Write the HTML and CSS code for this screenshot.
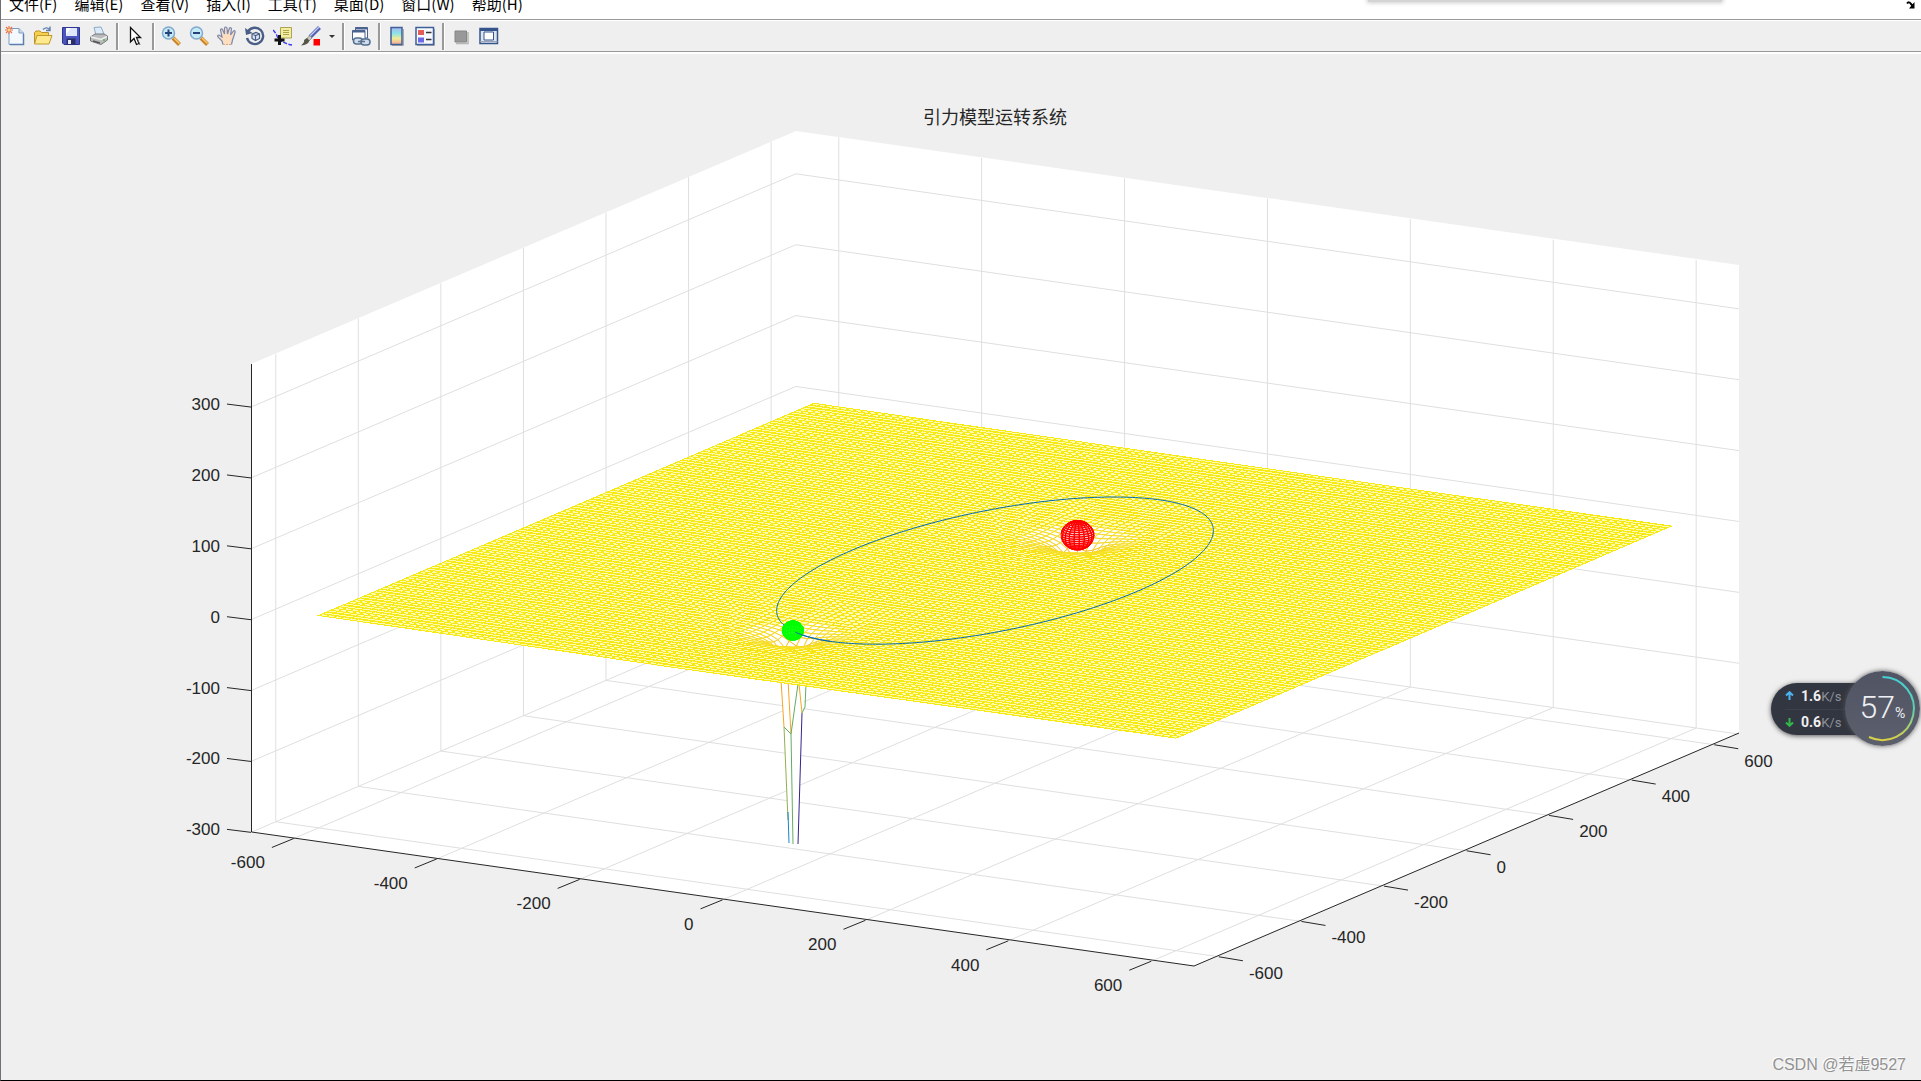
FILE: index.html
```html
<!DOCTYPE html>
<html lang="zh-CN">
<head>
<meta charset="utf-8">
<title>引力模型运转系统</title>
<link rel="stylesheet" href="styles.css">
</head>
<body>
<div class="window">
  <nav class="menubar">
    <button class="menu">文件(F)</button>
    <button class="menu">编辑(E)</button>
    <button class="menu">查看(V)</button>
    <button class="menu">插入(I)</button>
    <button class="menu">工具(T)</button>
    <button class="menu">桌面(D)</button>
    <button class="menu">窗口(W)</button>
    <button class="menu">帮助(H)</button>
    <button class="dock-arrow" aria-label="停靠">
      <svg width="10" height="8" viewBox="0 0 10 8"><path d="M1 2.500Q3 0 5 3L7 5" fill="none" stroke="#000" stroke-width="2"/><path d="M8.500 1V7.500H3Z"/></svg>
    </button>
  </nav>
  <div class="toolbar">
    <button class="tool" aria-label="新建"><svg viewBox="0 0 20 20"><path d="M4 2.500H14L18.500 7V18.500H4Z" fill="#f4f9ff" stroke="#7d9cc4"/><path d="M14 2.500V7H18.500" fill="#c6daf0" stroke="#7d9cc4"/><path d="M18.500 8V18.500H5" fill="none" stroke="#5c7fae" stroke-width="1.500"/><path d="M4 0V8M0 4H8M1 1L7 7M7 1L1 7" stroke="#e8734a" stroke-width="1.200"/><circle cx="4" cy="4" r="1.500" fill="#ffd98a"/></svg></button>
    <button class="tool" aria-label="打开"><svg viewBox="0 0 20 20"><path d="M1.500 17V6.500L3 5H7L8.500 6.500H15.500V17Z" fill="#f5cf4d" stroke="#b8922a"/><path d="M1.500 18L4 9.500H19L16 18Z" fill="#ffe98c" stroke="#c09a2c"/><path d="M10 3.500Q14 0 17 4M17 0.500V4.500H13" fill="none" stroke="#5e7fae" stroke-width="1.400"/></svg></button>
    <button class="tool" aria-label="保存"><svg viewBox="0 0 20 20"><path d="M1.500 1.500H18.500V18.500H3L1.500 17Z" fill="#4a55c0" stroke="#2c3590"/><path d="M5 2H16V10H5Z" fill="#dfe8fb"/><path d="M5 2H10L5 8Z" fill="#fff"/><path d="M5.500 12.500H14.500V18.500H5.500Z" fill="#2a2f66"/><path d="M7 14H10V18H7Z" fill="#e8ebf7"/></svg></button>
    <button class="tool" aria-label="打印"><svg viewBox="0 0 20 20"><path d="M5 1.500L12 1L15 8L7 9Z" fill="#dcebfa" stroke="#8fa9c6"/><path d="M1.500 11L6 8H15L18.500 10V14L12 18.500L1.500 15Z" fill="#b9bbbd" stroke="#77797b"/><path d="M2 11L12 13.500L18 10.500" fill="none" stroke="#eee" stroke-width="1.500"/><path d="M4 15L11 17" stroke="#555" stroke-width="1.500"/><circle cx="15" cy="14" r="1" fill="#57b94a"/></svg></button>
    <span class="sep"></span>
    <button class="tool" aria-label="编辑绘图"><svg viewBox="0 0 20 20"><path d="M5.500 1.500V16L9 12.500L11.500 18.500L14 17.500L11.500 11.500H15.500Z" fill="#fff" stroke="#111" stroke-width="1.300"/><path d="M12 12L15 19" stroke="#555" stroke-dasharray="2 1"/></svg></button>
    <span class="sep"></span>
    <button class="tool" aria-label="放大"><svg viewBox="0 0 20 20"><path d="M12 12L18.500 18.500" stroke="#c7832c" stroke-width="4"/><path d="M13 12L18.500 17.500" stroke="#ffc868" stroke-width="1.500"/><circle cx="7.500" cy="7" r="6" fill="#c4eaf6" stroke="#83a9cf" stroke-width="1.500"/><path d="M4 7H11M7.500 3.500V10.500" stroke="#26427c" stroke-width="2"/></svg></button>
    <button class="tool" aria-label="缩小"><svg viewBox="0 0 20 20"><path d="M12 12L18.500 18.500" stroke="#c7832c" stroke-width="4"/><path d="M13 12L18.500 17.500" stroke="#ffc868" stroke-width="1.500"/><circle cx="7.500" cy="7" r="6" fill="#c4eaf6" stroke="#83a9cf" stroke-width="1.500"/><path d="M4 7H11" stroke="#26427c" stroke-width="2"/></svg></button>
    <button class="tool" aria-label="平移"><svg viewBox="0 0 20 20"><path d="M6 18.500L5 15L1 11Q0 9 2 9L5 11L3.500 4Q4 2 5.500 3.500L7.500 8L7.500 2Q8.500 0 10 2L10.500 8L12.500 2Q14 1 14.500 3L13.500 9L16.500 5Q18.500 4 18 6.500L15.500 14L14.500 18.500" fill="#fddfc0" stroke="#7c88b0" stroke-width="1.200"/><path d="M6 18.500H14.500" stroke="#d9a57c" stroke-dasharray="2 1"/></svg></button>
    <button class="tool" aria-label="三维旋转"><svg viewBox="0 0 20 20"><path d="M3 5.500A8.200 8.200 0 1 1 2 12" fill="none" stroke="#4a5d86" stroke-width="2.400"/><path d="M0 2L1 9L7.500 7Z" fill="#4a5d86"/><path d="M7 8L11 6.500L14.500 8V12.500L10.500 14.500L7 12.500ZM7 8L10.500 9.500L14.500 8M10.500 9.500V14.500" fill="#dbe7f5" stroke="#4a5d86" stroke-width="1.200"/></svg></button>
    <button class="tool" aria-label="数据游标"><svg viewBox="0 0 20 20"><path d="M0 4Q4 8 5 13Q12 18 19 19" fill="none" stroke="#3a3af0" stroke-width="1.400" stroke-dasharray="4 1.500"/><path d="M7.500 1.500H18.500V12H7.500Z" fill="#f2eda0" stroke="#aba552"/><path d="M10 4.500H16M10 6.500H16M10 8.500H16" stroke="#aba552"/><path d="M1.500 14H11.500M6.500 9V19" stroke="#111" stroke-width="3"/></svg></button>
    <button class="tool" aria-label="刷亮"><svg viewBox="0 0 20 20"><path d="M18.500 1.500L9 11" stroke="#5462b4" stroke-width="4"/><path d="M18 1L9 10" stroke="#c5cdf2" stroke-width="1.300"/><path d="M9 9.500L11 12L8 15L5.500 12.500Z" fill="#c9c9c0" stroke="#777" stroke-width=".6"/><path d="M6 12L8.500 14.500Q7 19 0 19.500Q4 16 3 14Z" fill="#55554a"/><path d="M12.500 13H19V19.500H12.500Z" fill="#f00"/></svg></button>
    <button class="tool drop" aria-label="刷亮选项"><svg viewBox="0 0 6 20"><path d="M0 9H6L3 12Z" fill="#333"/></svg></button>
    <span class="sep"></span>
    <button class="tool" aria-label="链接绘图"><svg viewBox="0 0 20 20"><path d="M4.500 1.500H16.500V12H4.500Z" fill="#fff" stroke="#4a628f"/><path d="M1.500 4.500H14V14H1.500Z" fill="#fff" stroke="#4a628f"/><path d="M4.500 2.500H16.500M1.500 5.500H14" stroke="#4a628f" stroke-width="2"/><rect x="2.500" y="12" width="9" height="6" rx="3" fill="#cfdcec" stroke="#56708f" stroke-width="1.500"/><rect x="10" y="13" width="9" height="6" rx="3" fill="#cfdcec" stroke="#56708f" stroke-width="1.500"/><path d="M7 15.500H14" stroke="#56708f" stroke-width="1.500"/></svg></button>
    <span class="sep"></span>
    <button class="tool" aria-label="颜色栏"><svg viewBox="0 0 20 20"><defs><linearGradient id="bar" x2="0" y2="1"><stop stop-color="#aab6f2"/><stop offset=".35" stop-color="#8ce4e4"/><stop offset=".65" stop-color="#f2ec98"/><stop offset="1" stop-color="#f2a496"/></linearGradient></defs><path d="M5 19.500H16.500V3" fill="none" stroke="#aaa"/><path d="M4 1.500H15V18.500H4Z" fill="url(#bar)" stroke="#3f5f96" stroke-width="1.500"/></svg></button>
    <button class="tool" aria-label="图例"><svg viewBox="0 0 20 20"><path d="M2 19.500H19.500V3" fill="none" stroke="#aaa"/><path d="M1 1.500H18.500V18.500H1Z" fill="#f6f9fd" stroke="#3f5f96" stroke-width="1.500"/><path d="M3 4H9V9H3Z" fill="#e06058"/><path d="M3 11.500H9V16.500H3Z" fill="#6a6ae8"/><path d="M11 6.500H16.500M11 13.500H16.500" stroke="#333" stroke-width="1.500"/></svg></button>
    <span class="sep"></span>
    <button class="tool" aria-label="隐藏绘图工具"><svg viewBox="0 0 20 20"><path d="M5 17.500H17V6" fill="none" stroke="#b5b5b5" stroke-width="1.500"/><path d="M4 5H15.500V16H4Z" fill="#999" stroke="#858585"/></svg></button>
    <button class="tool" aria-label="显示绘图工具"><svg viewBox="0 0 20 20"><path d="M1 2.500H18.500V17.500H1Z" fill="#dfe5ee" stroke="#35548c" stroke-width="1.500"/><path d="M1 3.500H18.500" stroke="#35548c" stroke-width="3"/><path d="M5 6H14.500V14H5Z" fill="#fff" stroke="#35548c"/><path d="M1 15.500H18.500" stroke="#9aa5b6"/></svg></button>
  </div>
  <main class="figure">
    <svg id="plot" class="plot" viewBox="1 54 1920 1026" role="img" aria-label="引力模型运转系统">
      <path class="wall" d="M251 364 796 131 1739 265V733L1194 966 251 832Z"/>
      <g id="grid" class="grid"></g>
      <path class="axis" d="M251.500 364V832L1194 966 1739 733"/>
      <g id="ticks" class="axis"></g>
      <g class="spike">
        <path class="cover" d="M780 680 784 727 789 843 798 844 802 713 807 680Z"/>
        <path class="orange" d="M781 680 784 727M788 680 791 734M799 684 802 713"/>
        <path class="green" d="M798 684 791 734 784 727M806 684 805 707 802 713M791 734 793 844"/>
        <path class="olive" d="M784 727 788 820"/>
        <path class="blue" d="M788 812 789 843"/>
        <path class="purple" d="M802 713 798 844"/>
      </g>
      <g id="mesh" class="mesh"></g>
      <path id="orbit" class="orbit"/>
      <g id="balls"></g>
      <path id="trail" class="orbit"/>
      <text class="title" x="995" y="124">引力模型运转系统</text>
      <g id="labels" class="labels"></g>
    </svg>
  </main>
</div>
<div class="top-shadow"></div>
<aside class="monitor">
  <div class="rates">
    <div class="rate"><svg width="9" height="9" viewBox="0 0 9 9"><path d="M4.500 9V1.500M1 4.500L4.500 1.200L8 4.500" fill="none" stroke="#4bb4f0" stroke-width="2"/></svg><b>1.6</b><span>K/s</span></div>
    <div class="rate"><svg width="9" height="9" viewBox="0 0 9 9"><path d="M4.500 0V7.500M1 4.500L4.500 7.800L8 4.500" fill="none" stroke="#33b84a" stroke-width="2"/></svg><b>0.6</b><span>K/s</span></div>
  </div>
  <div class="dial">
    <svg class="arc" viewBox="0 0 75 75"><defs><linearGradient id="arc" x2="0" y2="1"><stop stop-color="#45d0d4"/><stop offset=".5" stop-color="#5ccfae"/><stop offset="1" stop-color="#dccf44"/></linearGradient></defs><path d="M37.500 6A31.500 31.500 0 1 1 24 66" fill="none" stroke="url(#arc)" stroke-width="2"/></svg>
    <span class="load">57</span><span class="pct">%</span>
  </div>
</aside>
<div class="watermark">CSDN @若虚9527</div>
<script src="plot.js"></script>
</body>
</html>
```
FILE: styles.css
```css
* { box-sizing: border-box; }
body {
  margin: 0;
  position: relative;
  background: #efefef;
  font-family: "Liberation Sans", "Noto Sans CJK SC", sans-serif;
  overflow: hidden;
}
button { border: 0; padding: 0; background: none; font: inherit; color: inherit; }

.window {
  min-height: 100vh;
  display: flex;
  flex-direction: column;
  border-left: 1px solid #6d7076;
  border-bottom: 1px solid #000;
}
.menubar {
  height: 20px;
  display: flex;
  align-items: flex-start;
  gap: 17px;
  padding: 0 5px 0 8px;
  background: #fff;
  border-bottom: 1px solid #999;
  font-family: "Noto Sans CJK SC", sans-serif;
  font-size: 15px;
  line-height: 8px;
  color: #000;
}
.menu { line-height: 8px; white-space: nowrap; }
.dock-arrow { margin-left: auto; }
.dock-arrow svg { display: block; margin-top: 1px; }

.toolbar {
  height: 34px;
  display: flex;
  align-items: center;
  padding-bottom: 1px;
  border-top: 1px solid #fff;
  border-bottom: 2px solid #fff;
  box-shadow: inset 0 -1px #999;
}
.tool {
  width: 28px;
  height: 28px;
  display: grid;
  place-items: center;
}
.tool svg { width: 20px; height: 20px; }
.drop { width: 14px; }
.drop svg { width: 6px; }
.sep {
  width: 8px;
  height: 27px;
  display: flex;
  justify-content: center;
}
.sep::before { content: ""; width: 2px; background: #999; border-right: 1px solid #fff; }

.figure { flex: 1; }
.plot { display: block; width: 100%; height: auto; }
.wall { fill: #fff; }
.grid { fill: none; stroke: #dfdfdf; }
.axis { fill: none; stroke: #262626; }
.labels { font-size: 17px; fill: #262626; }
.title {
  font-family: "Noto Sans CJK SC", sans-serif;
  font-size: 18px;
  text-anchor: middle;
  fill: #262626;
}
.end { text-anchor: end; }
.mesh { fill: #fff; shape-rendering: crispEdges; }
.flat { fill: #fffbb0; }
.steep { shape-rendering: geometricPrecision; }
.orbit { fill: none; stroke: #0066b0; stroke-width: 1; }
.spike { fill: none; }
.cover { fill: #fff; }
.orange { stroke: #f6a623; }
.green { stroke: #64ac62; }
.olive { stroke: #92b04e; }
.blue { stroke: #1389cc; }
.purple { stroke: #35258a; }

.top-shadow {
  position: absolute;
  top: -8px;
  right: 199px;
  width: 354px;
  height: 10px;
  background: #d4d4d4;
  box-shadow: 0 0 4px 1px #ccc;
}
.monitor {
  position: absolute;
  top: 671px;
  right: 1px;
  display: flex;
  align-items: center;
}
.rates {
  width: 111px;
  height: 52px;
  margin-right: -37px;
  padding-left: 14px;
  border-radius: 26px 0 0 26px;
  background: #323640;
  box-shadow: 0 1px 5px #555;
}
.rate {
  height: 26px;
  display: flex;
  align-items: center;
  color: #8d9099;
  font-family: Roboto, sans-serif;
  font-size: 13px;
}
.rate + .rate { border-top: 1px solid #3b404a; }
.rate b { margin-left: 7px; color: #f0f0f2; font-size: 14px; font-weight: 700; }
.rate span { padding-top: 1px; }
.dial {
  position: relative;
  width: 75px;
  height: 75px;
  display: flex;
  justify-content: center;
  align-items: baseline;
  padding: 14px 0 0 0;
  border-radius: 50%;
  background: linear-gradient(#505463, #5c606d);
  box-shadow: 0 0 5px #555;
  color: #eef0f4;
  font-family: Roboto, sans-serif;
}
.arc { position: absolute; inset: 0; }
.load { font-size: 32px; line-height: 44px; font-weight: 300; }
.pct { font-size: 14px; }
.watermark {
  position: absolute;
  right: 15px;
  bottom: 6px;
  font-family: "Liberation Sans", "Noto Sans CJK SC", sans-serif;
  font-size: 16px;
  line-height: 20px;
  color: #929292;
  text-shadow: -1px -1px #fff;
}
```
FILE: plot.js
```js
// Orthographic projection of data coordinates to drawing coordinates.
const project = (x, y, z) => [
  995 + 0.7145 * x + 0.4128 * y,
  570.6 + 0.1023 * x - 0.1767 * y - 0.7088 * z,
];
const byId = (id) => document.getElementById(id);
const pt = (x, y, z) => project(x, y, z).map((v) => v.toFixed(2)).join(' ');
const line = (...points) => 'M' + points.map((p) => pt(...p)).join('L');

function add(parent, tag, attrs, text) {
  const el = document.createElementNS('http://www.w3.org/2000/svg', tag);
  for (const key in attrs) el.setAttribute(key, attrs[key]);
  if (text !== undefined) el.textContent = text;
  parent.appendChild(el);
}

// Grid, tick marks and tick labels.
const END = 660, FLOOR = -300, TOP = 360;
let grid = '', ticks = '';
function tick(at, dx, dy, lx, ly, label, cls) {
  ticks += `M${at[0]} ${at[1]}l${dx} ${dy}`;
  add(byId('labels'), 'text', { x: at[0] + lx, y: at[1] + ly, class: cls }, label);
}
for (let v = -600; v <= 600; v += 200) {
  grid += line([v, -END, FLOOR], [v, END, FLOOR], [v, END, TOP]);
  grid += line([END, v, FLOOR], [-END, v, FLOOR], [-END, v, TOP]);
  tick(project(v, -END, FLOOR), -22, 9, -29, 30, v, 'end');
  tick(project(END, v, FLOOR), 24, 4, 30, 22, v, 'start');
}
for (let z = -300; z <= 300; z += 100) {
  grid += line([-END, -END, z], [-END, END, z], [END, END, z]);
  tick(project(-END, -END, z), -24, -3, -31, 3, z, 'end');
}
add(byId('grid'), 'path', { d: grid });
add(byId('ticks'), 'path', { d: ticks });

// Gravity surface: two wells, drawn back to front.
const SUN = { x: 0, y: 200, r: 20, k: 560 };
const PLANET = { x: -65, y: -377, r: 13, k: 480 };
const depth = (x, y) => -Math.min(60,
  SUN.k / (Math.hypot(x - SUN.x, y - SUN.y) + 0.1) +
  PLANET.k / (Math.hypot(x - PLANET.x, y - PLANET.y) + 0.1)) + 1;
const shade = (level) => {
  const t = Math.min(1, Math.max(0, -level / 40));
  return `rgb(247,${Math.round(234 - 50 * t)},${Math.round(18 + 40 * t)})`;
};
const STEP = 10, mesh = byId('mesh');
for (let y = 590; y >= -600; y -= STEP) {
  let run = '', runLevel = 0;
  const flush = () => {
    if (run) {
      add(mesh, 'path', {
        d: run, stroke: shade(runLevel), class: runLevel > -8 ? 'flat' : 'slope',
      });
    }
    run = '';
  };
  for (let x = -600; x < 600; x += STEP) {
    const corners = [[x, y], [x + STEP, y], [x + STEP, y + STEP], [x, y + STEP]]
      .map(([a, b]) => [a, b, depth(a, b)]);
    const quad = line(...corners) + 'Z';
    const level = Math.round(corners.reduce((s, c) => s + c[2], 0) / 4);
    if (level > -8) {
      if (level !== runLevel) flush();
      runLevel = level;
      run += quad;
    } else {
      flush();
      add(mesh, 'path', { d: quad, stroke: shade(level), class: 'steep' });
    }
  }
  flush();
}

// Wireframe balls: only the facets that face the viewer.
function ball(b, color, fill) {
  const n = 20;
  let d = '';
  const at = (i, j) => {
    const lat = Math.PI * (j / n - 0.5), lon = 2 * Math.PI * i / n;
    return [Math.cos(lat) * Math.cos(lon), Math.cos(lat) * Math.sin(lon), Math.sin(lat)];
  };
  const place = (p) => [b.x + b.r * p[0], b.y + b.r * p[1], b.r * p[2]];
  for (let i = 0; i < n; i++) {
    for (let j = 0; j < n; j++) {
      const m = at(i + 0.5, j + 0.5);
      if (0.48 * m[0] - 0.83 * m[1] + 0.276 * m[2] < 0) continue;
      d += line(...[at(i, j), at(i + 1, j), at(i + 1, j + 1), at(i, j + 1)].map(place)) + 'Z';
    }
  }
  add(byId('balls'), 'path', { d, stroke: color, fill });
}
ball(SUN, '#f00', '#fcc');
ball(PLANET, '#0f0', '#8f8');

// Elliptical orbit; the trail piece passes in front of the planet.
function arc(from, to) {
  const points = [];
  for (let a = from; a <= to; a += 1) {
    const t = a * Math.PI / 180;
    points.push([200 * Math.cos(t), 400 * Math.sin(t), 0]);
  }
  return line(...points);
}
byId('orbit').setAttribute('d', arc(-105, 247));
byId('trail').setAttribute('d', arc(-107, -90));
```
